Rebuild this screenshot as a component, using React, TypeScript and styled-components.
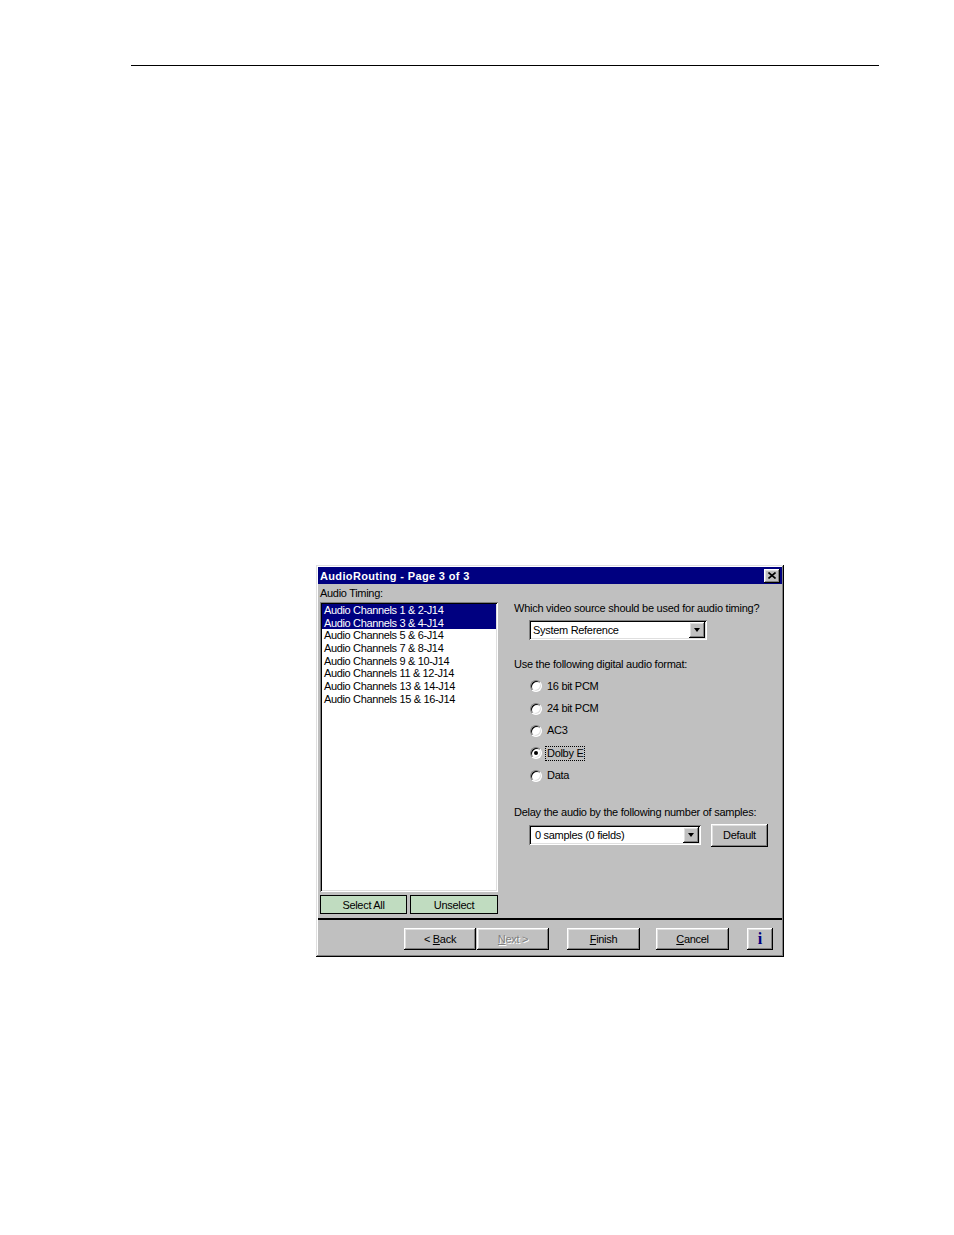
import React from 'react';
import styled, { createGlobalStyle, css } from 'styled-components';

const GlobalStyle = createGlobalStyle`
  html, body {
    margin: 0;
    padding: 0;
    background: #fff;
  }
  body {
    font-family: "Liberation Sans", Arial, sans-serif;
    font-size: 11px;
    color: #000;
  }
`;

const raised = css`
  background: #c0c0c0;
  box-shadow: inset -1px -1px #000, inset 1px 1px #fff, inset -2px -2px #808080,
    inset 2px 2px #dfdfdf;
`;

const sunken = css`
  box-shadow: inset 1px 1px #808080, inset -1px -1px #fff, inset 2px 2px #000,
    inset -2px -2px #dfdfdf;
`;

const Page = styled.div`
  width: 954px;
  height: 1235px;
  padding-top: 65px;
  box-sizing: border-box;
`;

const Rule = styled.div`
  margin-left: 131px;
  width: 748px;
  border-top: 1px solid #000;
`;

const Dialog = styled.div`
  margin: 499px 0 0 316px;
  width: 468px;
  box-sizing: border-box;
  padding: 2px;
  background: #c0c0c0;
  box-shadow: inset -1px -1px #000, inset 1px 1px #dfdfdf, inset -2px -2px #808080,
    inset 2px 2px #fff;
  letter-spacing: -0.3px;
`;

const TitleBar = styled.div`
  height: 17px;
  background: #000080;
  color: #fff;
  font-weight: bold;
  display: flex;
  align-items: center;
  justify-content: space-between;
  padding: 0 2px;
  letter-spacing: 0.35px;
`;

const CloseButton = styled.div`
  ${raised};
  width: 16px;
  height: 14px;
  display: flex;
  align-items: center;
  justify-content: center;
`;

const Body = styled.div`
  display: flex;
  padding: 0 2px;
`;

const LeftColumn = styled.div`
  width: 178px;
  display: flex;
  flex-direction: column;
`;

const Label = styled.div`
  height: 18px;
  line-height: 18px;
`;

const ListBox = styled.div`
  ${sunken};
  background: #fff;
  height: 290px;
  box-sizing: border-box;
  padding: 2px 2px;
  letter-spacing: -0.35px;
`;

const ListItem = styled.div<{ $selected?: boolean }>`
  height: 12.7px;
  line-height: 12.7px;
  padding-left: 2px;
  white-space: nowrap;
  background: ${(p) => (p.$selected ? '#000080' : 'transparent')};
  color: ${(p) => (p.$selected ? '#fff' : '#000')};
`;

const ListButtons = styled.div`
  display: flex;
  gap: 3px;
  margin-top: 3px;
`;

const GreenButton = styled.div<{ $width: number }>`
  width: ${(p) => p.$width}px;
  height: 19px;
  box-sizing: border-box;
  border: 1px solid #000;
  background: #c0dcc0;
  display: flex;
  align-items: center;
  justify-content: center;
`;

const RightColumn = styled.div`
  margin-left: 16px;
  display: flex;
  flex-direction: column;
`;

const Question = styled.div<{ $top: number }>`
  line-height: 14px;
  margin-top: ${(p) => p.$top}px;
  white-space: nowrap;
  letter-spacing: -0.25px;
`;

const ComboRow = styled.div<{ $top: number }>`
  display: flex;
  align-items: center;
  gap: 10px;
  margin: ${(p) => p.$top}px 0 0 15px;
`;

const Combo = styled.div<{ $width: number }>`
  ${sunken};
  background: #fff;
  width: ${(p) => p.$width}px;
  height: 20px;
  box-sizing: border-box;
  padding: 2px;
  display: flex;
  align-items: center;
`;

const ComboText = styled.div<{ $indent: number }>`
  flex: 1;
  padding-left: ${(p) => p.$indent}px;
  white-space: nowrap;
`;

const ArrowButton = styled.div`
  ${raised};
  width: 16px;
  height: 16px;
  display: flex;
  align-items: center;
  justify-content: center;
`;

const Arrow = styled.div`
  width: 0;
  height: 0;
  border-left: 3.5px solid transparent;
  border-right: 3.5px solid transparent;
  border-top: 4px solid #000;
`;

const RadioList = styled.div`
  margin: 4px 0 0 16px;
  display: flex;
  flex-direction: column;
`;

const RadioRow = styled.div`
  height: 22.4px;
  display: flex;
  align-items: center;
  gap: 4px;
`;

const RadioCircle = styled.div<{ $checked?: boolean }>`
  width: 12px;
  height: 12px;
  box-sizing: border-box;
  border-radius: 50%;
  border: 1px solid;
  border-color: #808080 #fff #fff #808080;
  box-shadow: inset 1px 1px #000, inset -1px -1px #dfdfdf;
  background: #fff;
  display: flex;
  align-items: center;
  justify-content: center;
  &::after {
    content: '';
    width: 4px;
    height: 4px;
    border-radius: 50%;
    background: ${(p) => (p.$checked ? '#000' : 'transparent')};
  }
`;

const RadioLabel = styled.span<{ $focused?: boolean }>`
  line-height: 13px;
  padding: 0 1px;
  outline: ${(p) => (p.$focused ? '1px dotted #000' : 'none')};
`;

const Button = styled.div<{ $width: number; $disabled?: boolean }>`
  ${raised};
  width: ${(p) => p.$width}px;
  height: 22px;
  display: flex;
  align-items: center;
  justify-content: center;
  white-space: nowrap;
  color: ${(p) => (p.$disabled ? '#808080' : '#000')};
  text-shadow: ${(p) => (p.$disabled ? '1px 1px #fff' : 'none')};
  u {
    text-decoration: underline;
  }
`;

const DefaultButton = styled(Button)`
  height: 23px;
`;

const Separator = styled.div`
  margin-top: 4px;
  height: 2px;
  background: #000;
`;

const Footer = styled.div`
  display: flex;
  justify-content: flex-end;
  align-items: center;
  padding: 8px 9px 5px 0;
`;

const Spacer = styled.div<{ $w: number }>`
  width: ${(p) => p.$w}px;
`;

const InfoGlyph = styled.span`
  font-family: "Liberation Serif", "Times New Roman", serif;
  font-weight: bold;
  font-size: 16px;
  color: #000080;
  letter-spacing: 0;
`;

const channels = [
  'Audio Channels 1 & 2-J14',
  'Audio Channels 3 & 4-J14',
  'Audio Channels 5 & 6-J14',
  'Audio Channels 7 & 8-J14',
  'Audio Channels 9 & 10-J14',
  'Audio Channels 11 & 12-J14',
  'Audio Channels 13 & 14-J14',
  'Audio Channels 15 & 16-J14',
];

const formats = ['16 bit PCM', '24 bit PCM', 'AC3', 'Dolby E', 'Data'];

const App: React.FC = () => {
  return (
    <>
      <GlobalStyle />
      <Page>
        <Rule />
        <Dialog>
          <TitleBar>
            <span>AudioRouting - Page 3 of 3</span>
            <CloseButton>
              <svg width="8" height="7" viewBox="0 0 8 7">
                <path d="M0.5 0.5 L7.5 6.5 M7.5 0.5 L0.5 6.5" stroke="#000" strokeWidth="1.6" />
              </svg>
            </CloseButton>
          </TitleBar>
          <Body>
            <LeftColumn>
              <Label>Audio Timing:</Label>
              <ListBox>
                {channels.map((c, i) => (
                  <ListItem key={c} $selected={i < 2}>
                    {c}
                  </ListItem>
                ))}
              </ListBox>
              <ListButtons>
                <GreenButton $width={87}>Select All</GreenButton>
                <GreenButton $width={88}>Unselect</GreenButton>
              </ListButtons>
            </LeftColumn>
            <RightColumn>
              <Question $top={17}>Which video source should be used for audio timing?</Question>
              <ComboRow $top={5}>
                <Combo $width={178}>
                  <ComboText $indent={2}>System Reference</ComboText>
                  <ArrowButton>
                    <Arrow />
                  </ArrowButton>
                </Combo>
              </ComboRow>
              <Question $top={17}>Use the following digital audio format:</Question>
              <RadioList>
                {formats.map((f) => (
                  <RadioRow key={f}>
                    <RadioCircle $checked={f === 'Dolby E'} />
                    <RadioLabel $focused={f === 'Dolby E'}>{f}</RadioLabel>
                  </RadioRow>
                ))}
              </RadioList>
              <Question $top={18}>Delay the audio by the following number of samples:</Question>
              <ComboRow $top={5}>
                <Combo $width={172}>
                  <ComboText $indent={4}>0 samples (0 fields)</ComboText>
                  <ArrowButton>
                    <Arrow />
                  </ArrowButton>
                </Combo>
                <DefaultButton $width={57}>Default</DefaultButton>
              </ComboRow>
            </RightColumn>
          </Body>
          <Separator />
          <Footer>
            <Button $width={72}>
              &lt;&nbsp;<u>B</u>ack
            </Button>
            <Spacer $w={1} />
            <Button $width={72} $disabled>
              <u>N</u>ext&nbsp;&gt;
            </Button>
            <Spacer $w={18} />
            <Button $width={73}>
              <u>F</u>inish
            </Button>
            <Spacer $w={16} />
            <Button $width={73}>
              <u>C</u>ancel
            </Button>
            <Spacer $w={18} />
            <Button $width={26}>
              <InfoGlyph>i</InfoGlyph>
            </Button>
          </Footer>
        </Dialog>
      </Page>
    </>
  );
};

export default App;
